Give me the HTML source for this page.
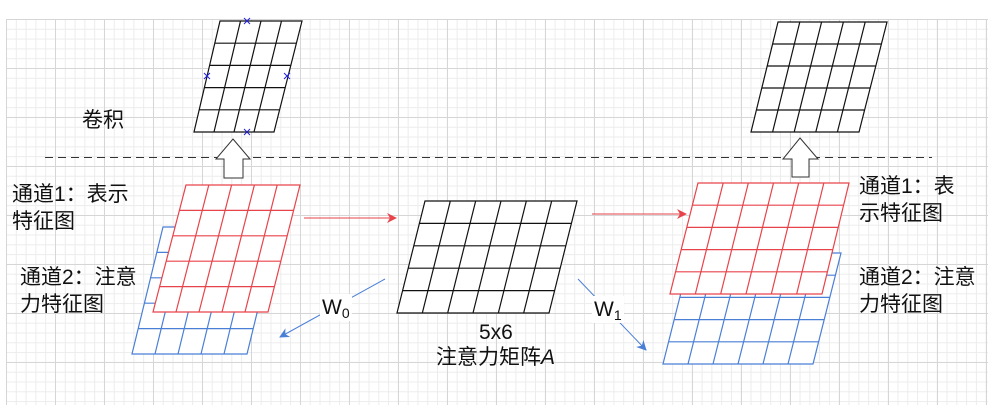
<!DOCTYPE html>
<html><head><meta charset="utf-8"><style>
html,body{margin:0;padding:0;background:#fff;}
#c{position:relative;width:996px;height:408px;overflow:hidden;background:#fff;}
#g{position:absolute;left:6px;top:19px;width:982px;height:386px;
background-image:
linear-gradient(#d6d6d6 1px,transparent 1px),
linear-gradient(90deg,#d6d6d6 1px,transparent 1px),
linear-gradient(#ececec 1px,transparent 1px),
linear-gradient(90deg,#ececec 1px,transparent 1px);
background-size:49px 49px,49px 49px,9.8px 9.8px,9.8px 9.8px;}
.t{position:absolute;font-family:"Liberation Sans","Noto Sans CJK SC",sans-serif;font-size:21px;color:#111;line-height:27px;white-space:nowrap;}
svg{position:absolute;left:0;top:0;}
</style></head><body><div id="c"><div id="g"></div>
<svg id="s" width="996" height="408" xmlns="http://www.w3.org/2000/svg">
<defs>
<marker id="mr" markerWidth="10" markerHeight="10" refX="9" refY="5" orient="auto" markerUnits="userSpaceOnUse"><path d="M0,0 L10,5 L0,10 L3,5 z" fill="#e8434a"/></marker>
<marker id="mb" markerWidth="10" markerHeight="10" refX="9" refY="5" orient="auto" markerUnits="userSpaceOnUse"><path d="M0,0 L10,5 L0,10 L3,5 z" fill="#4a7fd6"/></marker>
</defs>
<line x1="45" y1="157.5" x2="932" y2="157.5" stroke="#333" stroke-width="1" stroke-dasharray="8,5"/>
<g id="grids"></g>
<path d="M233,139 L250,159 L243,159 L243,178 L224,178 L224,159 L216,159 Z" fill="#fff" stroke="#333"/>
<path d="M800,138 L818,159 L809,159 L809,177 L792,177 L792,159 L783,159 Z" fill="#fff" stroke="#333"/>
<line x1="304" y1="218" x2="396" y2="218" stroke="#e8434a" marker-end="url(#mr)"/>
<line x1="592" y1="214" x2="686" y2="214" stroke="#e8434a" marker-end="url(#mr)"/>
<line x1="385" y1="279" x2="280" y2="337" stroke="#4a7fd6" marker-end="url(#mb)"/>
<line x1="578" y1="279" x2="646" y2="350" stroke="#4a7fd6" marker-end="url(#mb)"/>
<g stroke="#2222dd" stroke-width="1">
<path d="M244,18 l6,6 M250,18 l-6,6 M204,73 l6,6 M210,73 l-6,6 M284,73 l6,6 M290,73 l-6,6 M244,129 l6,6 M250,129 l-6,6"/>
</g>
</svg>
<div class="t" style="left:12px;top:181px;">通道1：表示<br>特征图</div>
<div class="t" style="left:20px;top:264px;">通道2：注意<br>力特征图</div>
<div class="t" style="left:859px;top:173px;">通道1：表<br>示特征图</div>
<div class="t" style="left:859px;top:264px;">通道2：注意<br>力特征图</div>
<div class="t" style="left:82px;top:107px;">卷积</div>
<div class="t" style="left:320px;top:294px;background:#fff;padding:0 2px;">W<sub style="font-size:14px;vertical-align:-4px;line-height:0">0</sub></div>
<div class="t" style="left:592px;top:296px;background:#fff;padding:0 2px;">W<sub style="font-size:14px;vertical-align:-4px;line-height:0">1</sub></div>
<div class="t" style="left:479px;top:319px;">5x6</div>
<div class="t" style="left:436px;top:344px;">注意力矩阵<i>A</i></div>
</div>
<script>
function grid(tl,tr,bl,br,y0,y1,cols,rows,col){
 var ns="http://www.w3.org/2000/svg",g=document.getElementById("grids");
 var p=document.createElementNS(ns,"path");
 var d="M"+tl+","+y0+" L"+tr+","+y0+" L"+br+","+y1+" L"+bl+","+y1+" Z";
 for(var i=1;i<cols;i++){var a=tl+(tr-tl)*i/cols,b=bl+(br-bl)*i/cols;d+=" M"+a+","+y0+" L"+b+","+y1;}
 for(var j=1;j<rows;j++){var f=j/rows,y=y0+(y1-y0)*f,l=tl+(bl-tl)*f,r=tr+(br-tr)*f;d+=" M"+l+","+y+" L"+r+","+y;}
 p.setAttribute("d",d);p.setAttribute("fill","#fff");p.setAttribute("stroke",col);p.setAttribute("stroke-width","1.2");
 g.appendChild(p);
}
grid(220,302,194,274,21,132,4,5,"#111");
grid(778,887,751,859,22,132,5,5,"#111");
grid(163,278,132,247,227,354,5,5,"#4a7fd6");
grid(186,300,153,268,185,312,5,5,"#e8434a");
grid(425,577,397,549,201,313,6,5,"#111");
grid(691,841,663,813,253,364,6,5,"#4a7fd6");
grid(698,849,670,822,183,294,6,5,"#e8434a");
</script>
</body></html>
